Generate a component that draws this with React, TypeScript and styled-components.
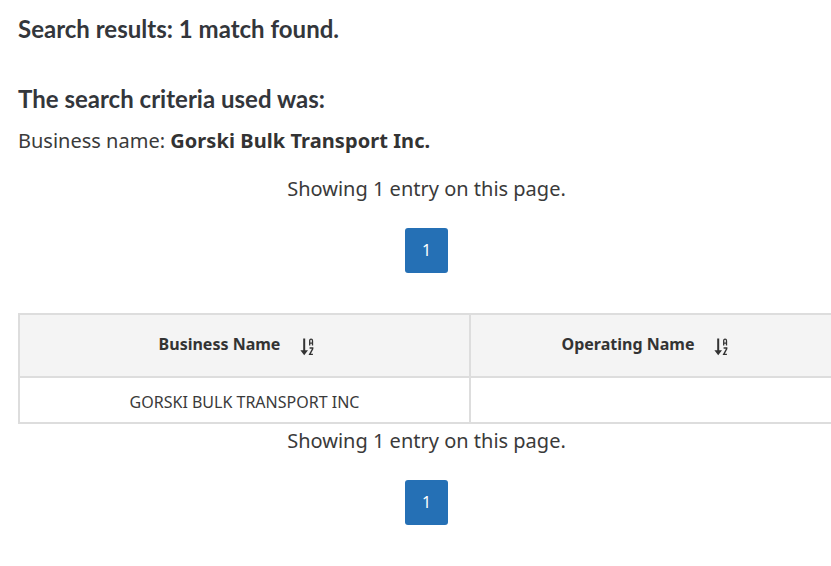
import React from "react";
import styled, { createGlobalStyle } from "styled-components";

const Global = createGlobalStyle`
  html, body { margin: 0; padding: 0; background: #fff; overflow: hidden; }
  body { font-family: "Noto Sans", "Open Sans", "Liberation Sans", sans-serif; color: #3a3a3a; }
`;

const Page = styled.main`
  width: 817px;
  padding: 0 18px;
`;

const Heading = styled.h2`
  margin: 0;
  font-family: Lato, "Liberation Sans", sans-serif;
  font-weight: 700;
  font-size: 24px;
  line-height: 30px;
  letter-spacing: 0.01px;
  color: #33363b;
  padding-top: ${(p: { $top: number }) => p.$top}px;
`;

const Criteria = styled.p`
  margin: 12px 0 0;
  font-size: 20px;
  line-height: 30px;
  strong { font-weight: 700; letter-spacing: 0.07px; color: #333; }
`;

const Summary = styled.p`
  margin: ${(p: { $top: number }) => p.$top}px 0 0;
  text-align: center;
  font-size: 20px;
  line-height: 26px;
`;

const Pager = styled.nav`
  display: flex;
  justify-content: center;
  margin-top: 26px;
`;

const PageButton = styled.button`
  width: 43px;
  height: 45px;
  padding: 0 0 1px;
  border: 0;
  border-radius: 3px;
  background: #2570b5;
  color: #fff;
  font-family: inherit;
  font-size: 16px;
`;

const Table = styled.table`
  width: 817px;
  margin-top: 40px;
  border-collapse: collapse;
  table-layout: fixed;
  th, td { border: 2px solid #ddd; text-align: center; }
`;

const HeadCell = styled.th`
  height: 61px;
  padding: 0;
  background: #f4f4f4;
  font-size: 16px;
  font-weight: 700;
  color: #333;
  width: ${(p: { $w: number }) => p.$w}px;
`;

const HeadInner = styled.span`
  display: inline-flex;
  align-items: center;
  gap: 19px;
  padding-right: 15px;
`;

const HeadLabel = styled.span`
  margin-bottom: 3px;
`;

const SortSvg = styled.svg`
  width: 16px;
  height: 18px;
  margin-top: 2px;
  flex: none;
`;

const BodyCell = styled.td`
  box-sizing: border-box;
  height: 46px;
  padding: 4px 0 0;
  font-size: 16px;
  color: #3a3a3a;
`;

function SortIcon() {
  return (
    <SortSvg viewBox="0 0 16 18" aria-hidden="true">
      <path d="M4.2 0.5h2v11.8h2.8L5.2 17.2 1.4 12.3h2.8z" fill="#333" />
      <path
        d="M10.7 7.5V2.8c0-1.1 .4-1.7 1.4-1.7s1.4.6 1.4 1.7v4.7M10.7 5.2h2.8"
        fill="none"
        stroke="#333"
        strokeWidth="1.3"
      />
      <path d="M10.6 10h3.1v.9l-3 5.5h3.2" fill="none" stroke="#333" strokeWidth="1.4" />
    </SortSvg>
  );
}

export default function App() {
  return (
    <Page>
      <Global />
      <Heading $top={14}>Search results: 1 match found.</Heading>
      <Heading $top={40}>The search criteria used was:</Heading>
      <Criteria>
        Business name: <strong>Gorski Bulk Transport Inc.</strong>
      </Criteria>
      <Summary $top={20}>Showing 1 entry on this page.</Summary>
      <Pager>
        <PageButton>1</PageButton>
      </Pager>
      <Table>
        <thead>
          <tr>
            <HeadCell $w={449}>
              <HeadInner>
                <HeadLabel>Business Name</HeadLabel>
                <SortIcon />
              </HeadInner>
            </HeadCell>
            <HeadCell $w={364}>
              <HeadInner>
                <HeadLabel>Operating Name</HeadLabel>
                <SortIcon />
              </HeadInner>
            </HeadCell>
          </tr>
        </thead>
        <tbody>
          <tr>
            <BodyCell>GORSKI BULK TRANSPORT INC</BodyCell>
            <BodyCell />
          </tr>
        </tbody>
      </Table>
      <Summary $top={4}>Showing 1 entry on this page.</Summary>
      <Pager>
        <PageButton>1</PageButton>
      </Pager>
    </Page>
  );
}
